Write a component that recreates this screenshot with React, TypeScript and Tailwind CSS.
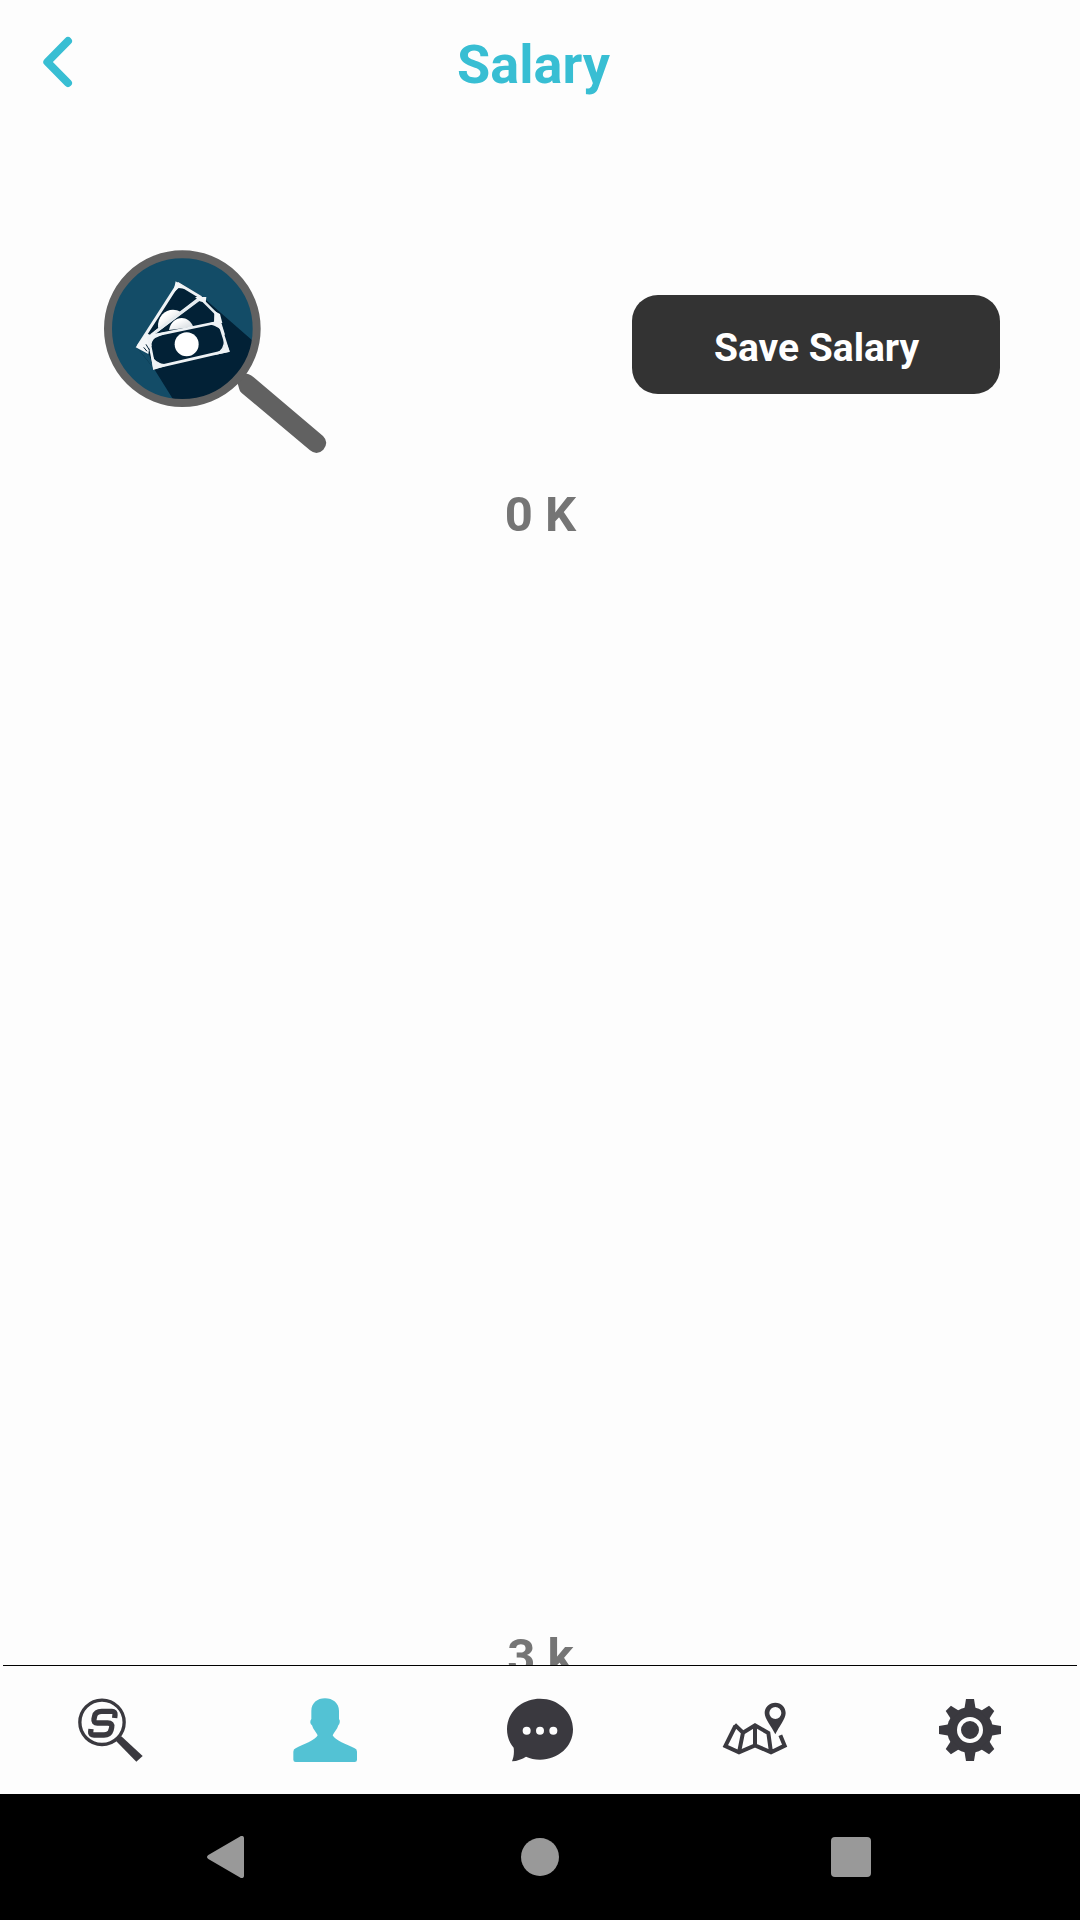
const ink = '#3a393f';

function BackChevron() {
  return (
    <svg className="h-[90px] w-[100px]" viewBox="0 0 300 270" fill="none">
      <path d="M144 63L82 126L144 189" stroke="#38bed3" strokeWidth="24" strokeLinecap="round" strokeLinejoin="round" />
    </svg>
  );
}

function MoneySearchLogo() {
  return (
    <svg className="h-[220px] w-[240px]" viewBox="0 0 720 660">
      <defs>
        <clipPath id="lens">
          <circle cx="262" cy="266" r="216" />
        </clipPath>
        <linearGradient id="coin" x1="0" y1="0" x2="1" y2="1">
          <stop offset="0.3" stopColor="#fff" />
          <stop offset="1" stopColor="#ccd3d8" />
        </linearGradient>
        <filter id="soft" x="-5%" y="-5%" width="110%" height="110%" colorInterpolationFilters="sRGB">
          <feGaussianBlur stdDeviation="2.2" />
        </filter>
      </defs>
      <g filter="url(#soft)">
        <path d="M425 420L433 448Q434 454 440 459L645 631Q666 648 685 629Q703 607 684 588L476 412Q460 398 440 400Z" fill="#616161" />
        <circle cx="262" cy="266" r="223" fill="#134c67" />
        <g clipPath="url(#lens)">
          <path d="M250 125L322 170L500 326L480 500H248L178 388L124 320Z" fill="#022136" />
          <path d="M124 320L178 388L160 338Z" fill="#134c67" />
        </g>
        <circle cx="262" cy="266" r="223" fill="none" stroke="#616161" strokeWidth="24" />
        <path d="M250 131L317 172L376 232L378 252L168 286L158 334L128 318Z" fill="#022136" />
        <path d="M129 319L250 131L317 172L168 286" fill="none" stroke="#eef2f5" strokeWidth="9" strokeLinejoin="round" />
        <path d="M242 124L274 147L251 144L234 160ZM122 322L154 280L168 286L160 342Z" fill="#f3f6f8" />
        <path d="M189 264C186 219 227 198 257 216L205 258Z" fill="url(#coin)" />
        <path d="M180 277L317 175L372 230" fill="none" stroke="#e5ebef" strokeWidth="8" strokeLinejoin="round" />
        <path d="M300 171L334 171L332 188L314 184ZM358 213L375 222L382 249L357 249Z" fill="#f1f5f7" />
        <path d="M222 270C230 228 279 220 295 261Z" fill="url(#coin)" />
        <path d="M160 290L372 246L399 332L178 383Z" fill="#022136" stroke="#eef2f5" strokeWidth="8" strokeLinejoin="round" />
        <path d="M158 288L212 278L180 292Q166 303 168 318ZM344 251L376 245L388 284Q377 257 344 251ZM402 334L362 342Q391 330 388 299ZM176 387L170 346Q177 371 213 375Z" fill="#eef2f5" stroke="#eef2f5" strokeWidth="4" />
        <circle cx="275" cy="313" r="36" fill="#fff" />
        <path d="M146 322L156 334M153 313L163 330" stroke="#022136" strokeWidth="3" />
      </g>
    </svg>
  );
}

function SearchIcon() {
  return (
    <svg className="size-20" viewBox="209 120 240 240" fill="none" stroke={ink}>
      <circle cx="305" cy="217" r="66.5" strokeWidth="10" />
      <path d="M345 271L363 259L427 318L408 335Z" fill={ink} stroke="none" />
      <path d="M343 204L344 194Q345 184 335 184H304Q286 184 283 198L281 207Q279 219 291 219H322Q337 219 334 232L332 241Q328 255 311 255H281Q270 255 271 246L272 237" strokeWidth="16" />
    </svg>
  );
}

function ProfileIcon() {
  return (
    <svg className="size-20" viewBox="45 29 240 240" fill="#53c2d4">
      <path d="M165 54C188 54 207 68 207 92V116Q211 121 209 127Q208 132 205 135C202 148 191 157 188 165C194 179 231 193 254 204Q261 207 261 214V238Q261 245 254 245H77Q70 245 70 238V214Q70 207 77 204C98 193 137 179 143 165C140 157 129 148 126 135Q122 132 121 127Q120 121 124 116V92C124 68 142 54 165 54Z" />
    </svg>
  );
}

function ChatIcon() {
  return (
    <svg className="size-20" viewBox="30 209 240 240">
      <path d="M150 235C205 235 249 275 249 327C249 379 205 418 150 418C134 418 121 415 108 409C97 416 82 422 66 423C71 411 73 397 71 382C58 367 51 348 51 327C51 275 95 235 150 235Z" fill={ink} />
      <g fill="#fdfdfd">
        <circle cx="110" cy="331" r="12" />
        <circle cx="150" cy="331" r="12" />
        <circle cx="190" cy="331" r="12" />
      </g>
    </svg>
  );
}

function MapIcon() {
  return (
    <svg className="size-20" viewBox="15 29 240 240" fill="none" stroke={ink} strokeWidth="12">
      <path d="M76 137L46 197L87 216L135 195L183 216L224 196L211 165M74 133L99 157L135 135L175 158L183 216M99 157L87 216M135 135V195" />
      <path fillRule="evenodd" d="M196 67C214 67 227 81 227 98C227 116 207 139 196 162C185 139 164 116 164 98C164 81 178 67 196 67ZM196 80A18 18 0 1 0 196 116A18 18 0 1 0 196 80Z" fill={ink} stroke="none" />
    </svg>
  );
}

function GearIcon() {
  return (
    <svg className="size-20" viewBox="30 120 240 240" fill={ink}>
      <circle cx="150" cy="240" r="69" />
      {[0, 45, 90, 135, 180, 225, 270, 315].map((angle) => (
        <path
          key={angle}
          d={angle % 90 === 0 ? 'M133 178L138 147H162L167 178Z' : 'M132 180L139 148H161L168 180Z'}
          transform={`rotate(${angle} 150 240)`}
        />
      ))}
      <circle cx="150" cy="240" r="33" fill="none" stroke="#fdfdfd" strokeWidth="12" />
    </svg>
  );
}

export default function App() {
  return (
    <div className="flex h-[1920px] w-[1080px] flex-col overflow-hidden bg-[#fdfdfd] font-['Roboto',sans-serif] font-bold">
      <header className="grid h-[130px] grid-cols-[120px_1fr_133px] items-center">
        <button className="pl-5" aria-label="Back">
          <BackChevron />
        </button>
        <h1 className="text-center text-[54px] leading-none text-[#38bed3]">Salary</h1>
      </header>

      <main className="flex h-[1535px] flex-col overflow-hidden">
        <section className="flex h-[330px] shrink-0 items-start justify-between pt-[110px] pr-20 pl-[95px]">
          <MoneySearchLogo />
          <button className="mt-[55px] flex h-[99px] w-[368px] items-center justify-center rounded-[26px] bg-[#333] pt-2 pl-px text-[39px] leading-none text-white">
            Save Salary
          </button>
        </section>
        <div className="flex h-[1222px] shrink-0 flex-col items-center justify-between pt-[30px] pl-px text-[49px] leading-[50px] text-[#757575]">
          <span>0 K</span>
          <span>3 k</span>
        </div>
      </main>

      <nav className="flex h-[129px] flex-col px-0.5">
        <div className="mx-px h-px bg-black" />
        <div className="grid flex-1 grid-cols-5 place-items-center">
          <SearchIcon />
          <ProfileIcon />
          <ChatIcon />
          <MapIcon />
          <GearIcon />
        </div>
      </nav>

      <footer className="flex h-[126px] items-center justify-between bg-black pr-[209px] pl-[207px]">
        <svg className="h-[42px] w-[37px]" viewBox="0 0 111 126" fill="#999">
          <path d="M98 2Q102 -1 107 0Q111 1 111 6V120Q111 125 107 126Q102 127 98 124L4 69Q-4 63 4 57Z" />
        </svg>
        <div className="ml-[5px] size-[38px] rounded-full bg-[#999]" />
        <div className="size-10 rounded-[4px] bg-[#999]" />
      </footer>
    </div>
  );
}
